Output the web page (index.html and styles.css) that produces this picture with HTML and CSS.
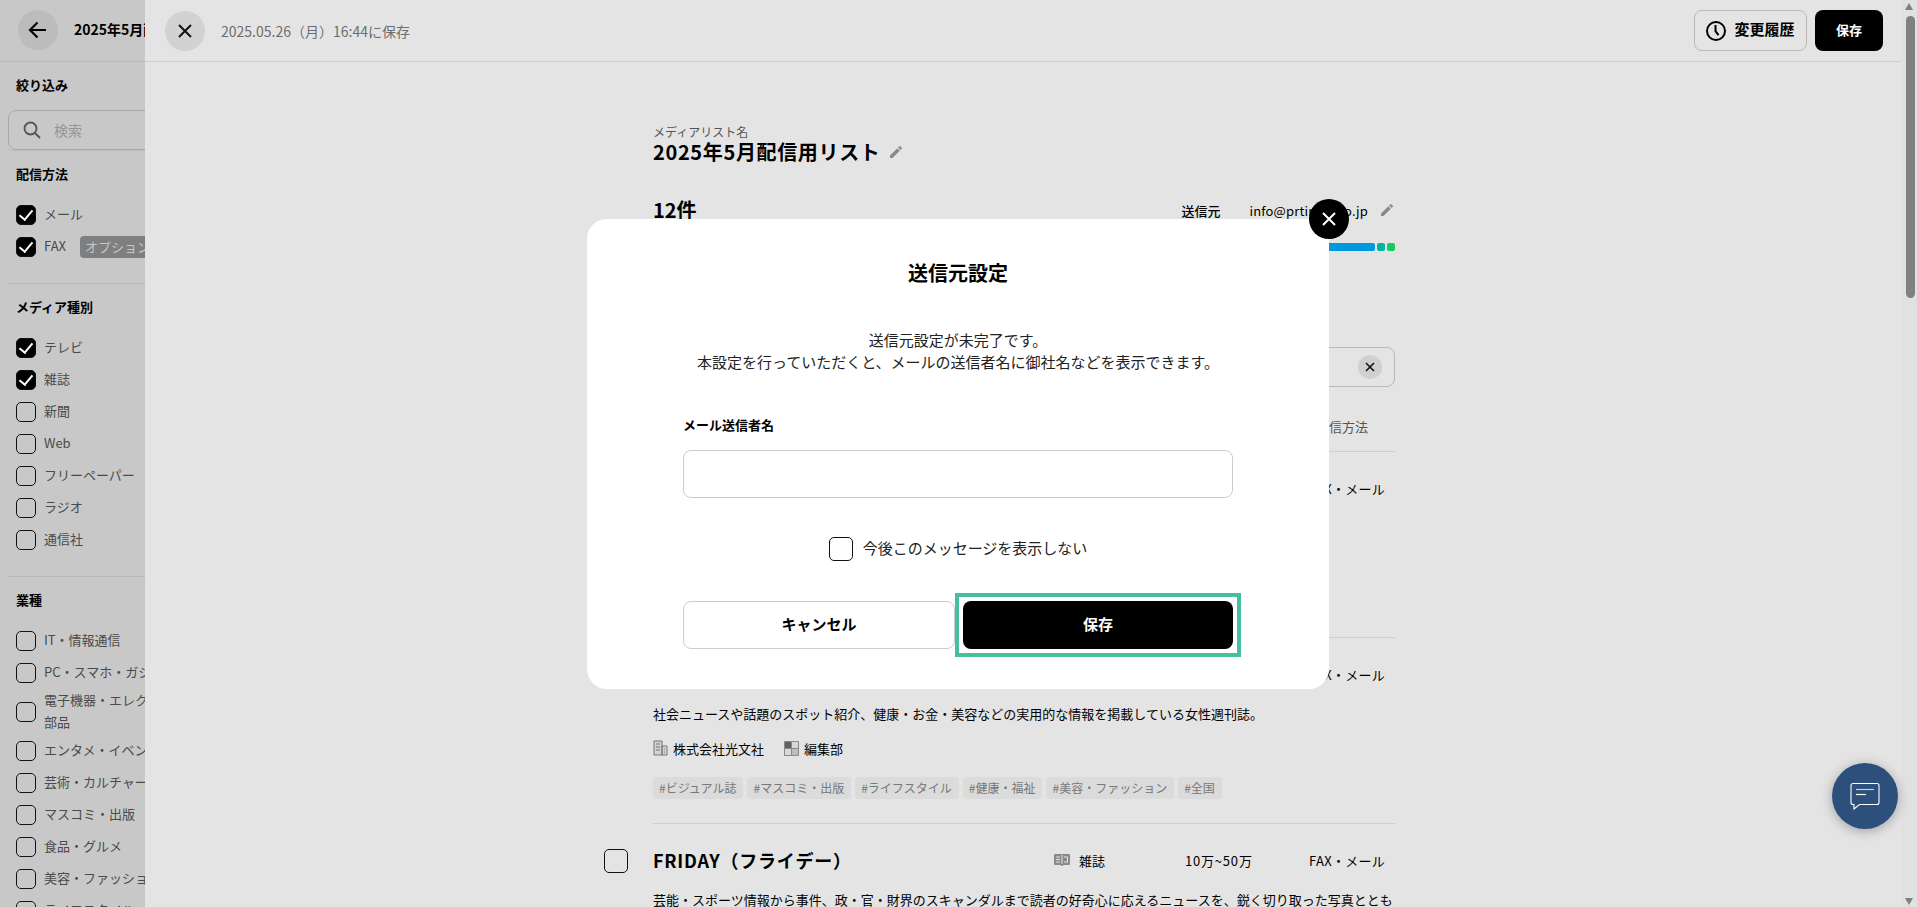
FILE: index.html
```html
<!DOCTYPE html>
<html lang="ja">
<head>
  <meta charset="UTF-8" />
  <title>メディアリスト</title>
  <link rel="stylesheet" href="styles.css">
</head>
<body>

  <aside class="sidebar">
    <div class="sidebar-head">
      <button class="round-btn dark">
        <svg width="20" height="20" viewBox="0 0 20 20"><path d="M18 10H2M9.500 2.500 2 10l7.500 7.500" fill="none" stroke="#000" stroke-width="2.200"/></svg>
      </button>
      <span class="list-name">2025年5月配信用リスト</span>
    </div>
    <div class="filter">
      <h4 class="filter-title">絞り込み</h4>
      <div class="search-wrap">
        <div class="search">
          <svg width="18" height="18" viewBox="0 0 18 18"><circle cx="7.500" cy="7.500" r="6" fill="none" stroke="#555" stroke-width="1.800"/><path d="m12 12 5 5" stroke="#555" stroke-width="2"/></svg>
          <span>検索</span>
        </div>
      </div>

      <section class="filter-group">
        <h4 class="filter-title">配信方法</h4>
        <div class="rows">
          <label class="row-check"><i class="check on"></i><span>メール</span></label>
          <label class="row-check"><i class="check on"></i><span>FAX</span><b class="option">オプション</b></label>
        </div>
      </section>

      <section class="filter-group">
        <h4 class="filter-title">メディア種別</h4>
        <div class="rows">
          <label class="row-check"><i class="check on"></i><span>テレビ</span></label>
          <label class="row-check"><i class="check on"></i><span>雑誌</span></label>
          <label class="row-check"><i class="check"></i><span>新聞</span></label>
          <label class="row-check"><i class="check"></i><span>Web</span></label>
          <label class="row-check"><i class="check"></i><span>フリーペーパー</span></label>
          <label class="row-check"><i class="check"></i><span>ラジオ</span></label>
          <label class="row-check"><i class="check"></i><span>通信社</span></label>
        </div>
      </section>

      <section class="filter-group">
        <h4 class="filter-title">業種</h4>
        <div class="rows">
          <label class="row-check"><i class="check"></i><span>IT・情報通信</span></label>
          <label class="row-check"><i class="check"></i><span>PC・スマホ・ガジェット</span></label>
          <label class="row-check"><i class="check"></i><span>電子機器・エレクトロニクス部品</span></label>
          <label class="row-check"><i class="check"></i><span>エンタメ・イベント</span></label>
          <label class="row-check"><i class="check"></i><span>芸術・カルチャー</span></label>
          <label class="row-check"><i class="check"></i><span>マスコミ・出版</span></label>
          <label class="row-check"><i class="check"></i><span>食品・グルメ</span></label>
          <label class="row-check"><i class="check"></i><span>美容・ファッション</span></label>
          <label class="row-check"><i class="check"></i><span>ライフスタイル</span></label>
        </div>
      </section>
    </div>
  </aside>

  <main class="panel">
    <header class="topbar">
      <button class="round-btn">
        <svg width="16" height="16" viewBox="0 0 16 16"><path d="m2 2 12 12M14 2 2 14" stroke="#111" stroke-width="2"/></svg>
      </button>
      <span class="saved-at">2025.05.26（月）16:44に保存</span>
      <button class="btn-history">
        <svg width="20" height="20" viewBox="0 0 20 20"><circle cx="10" cy="10" r="9" fill="none" stroke="#000" stroke-width="2"/><path d="M9.500 4v6.200l3 4" fill="none" stroke="#000" stroke-width="2"/></svg>
        <span>変更履歴</span>
      </button>
      <button class="btn-save">保存</button>
    </header>

    <div class="content">
      <p class="name-label">メディアリスト名</p>
      <h1 class="name">2025年5月配信用リスト
        <svg class="pen" width="16" height="16" viewBox="0 0 24 24"><path d="M3 17.250V21h3.750L17.810 9.940l-3.750-3.750L3 17.250zM20.710 7.040a1 1 0 0 0 0-1.410l-2.340-2.340a1 1 0 0 0-1.410 0l-1.830 1.830 3.750 3.750 1.830-1.830z"/></svg>
      </h1>

      <div class="summary">
        <h2 class="count">12件</h2>
        <div class="sender">
          <b>送信元</b>
          <span>info@prtimes.co.jp</span>
          <svg class="pen" width="16" height="16" viewBox="0 0 24 24"><path d="M3 17.250V21h3.750L17.810 9.940l-3.750-3.750L3 17.250zM20.710 7.040a1 1 0 0 0 0-1.410l-2.340-2.340a1 1 0 0 0-1.410 0l-1.830 1.830 3.750 3.750 1.830-1.830z"/></svg>
        </div>
      </div>

      <div class="usage">
        <i class="usage-mail"></i>
        <i class="usage-teal"></i>
        <i class="usage-green"></i>
      </div>

      <div class="tag-input">
        <button class="chip-clear">
          <svg width="10" height="10" viewBox="0 0 10 10"><path d="m1 1 8 8M9 1 1 9" stroke="#111" stroke-width="1.600"/></svg>
        </button>
      </div>

      <div class="list-head">配信方法</div>

      <article class="media">
        <div class="media-head">
          <i class="check big"></i>
          <h3 class="media-title"></h3>
          <span class="col-delivery">FAX・メール</span>
        </div>
      </article>

      <article class="media">
        <div class="media-head">
          <i class="check big"></i>
          <h3 class="media-title"></h3>
          <span class="col-delivery">FAX・メール</span>
        </div>
        <p class="media-desc">社会ニュースや話題のスポット紹介、健康・お金・美容などの実用的な情報を掲載している女性週刊誌。</p>
        <div class="media-meta">
          <span>
            <svg width="15" height="16" viewBox="0 0 15 16"><path d="M1 1h8v14H1zM9 6h5v9H9z" fill="#d2d2d2" stroke="#777"/><path d="M3 4h4M3 7h4M3 10h4M11 9h1M11 12h1" stroke="#777"/></svg>
            株式会社光文社
          </span>
          <span>
            <svg width="15" height="15" viewBox="0 0 15 15"><path fill="#d8d8d8" stroke="#8a8a8a" d="M.5.500h14v14H.5z"/><path fill="#5f5f5f" d="M1 1h6v6H1z"/><path fill="#bdbdbd" d="M8 8h6v6H8z"/><path stroke="#8a8a8a" d="M7.500 1v13M1 7.500h13"/></svg>
            編集部
          </span>
        </div>
        <ul class="tags">
          <li>#ビジュアル誌</li>
          <li>#マスコミ・出版</li>
          <li>#ライフスタイル</li>
          <li>#健康・福祉</li>
          <li>#美容・ファッション</li>
          <li>#全国</li>
        </ul>
      </article>

      <article class="media">
        <div class="media-head">
          <i class="check big"></i>
          <h3 class="media-title">FRIDAY（フライデー）</h3>
          <span class="col-type">
            <svg width="16" height="12" viewBox="0 0 16 12"><rect width="16" height="11" rx="1" fill="#8a8a8a"/><path d="M7 10h2v2H7z" fill="#8a8a8a"/><path stroke="#e4e4e4" d="M8 1v9M2 3h4M2 5.500h4M2 8h4M10 3h4M13.500 3v5M10 8h4"/></svg>
            雑誌
          </span>
          <span class="col-reach">10万~50万</span>
          <span class="col-delivery">FAX・メール</span>
        </div>
        <p class="media-desc">芸能・スポーツ情報から事件、政・官・財界のスキャンダルまで読者の好奇心に応えるニュースを、鋭く切り取った写真とともに伝える写真週刊誌。</p>
      </article>
    </div>
  </main>

  <div class="scrollbar">
    <i class="arrow-up"></i>
    <i class="thumb"></i>
    <i class="arrow-down"></i>
  </div>

  <div class="overlay">
    <div class="modal">
      <button class="modal-close">
        <svg width="14" height="14" viewBox="0 0 14 14"><path d="m1 1 12 12M13 1 1 13" stroke="#fff" stroke-width="2"/></svg>
      </button>
      <h2 class="modal-title">送信元設定</h2>
      <p class="modal-msg">送信元設定が未完了です。<br>本設定を行っていただくと、メールの送信者名に御社名などを表示できます。</p>
      <label class="field-label" for="senderName">メール送信者名</label>
      <input class="field" id="senderName" type="text" />
      <label class="dont-show"><i class="check big"></i><span>今後このメッセージを表示しない</span></label>
      <div class="modal-actions">
        <button class="btn-cancel">キャンセル</button>
        <button class="btn-confirm">保存</button>
      </div>
    </div>
  </div>

  <button class="chat-fab">
    <svg width="30" height="28" viewBox="0 0 30 28"><path d="M3 1.500h24a2 2 0 0 1 2 2v17a2 2 0 0 1-2 2H9.500L4 27v-4.500H3a2 2 0 0 1-2-2v-17a2 2 0 0 1 2-2z" fill="none" stroke="#fff" stroke-width="1.100"/><path d="M6 7.500h18" stroke="#c6cfdc" stroke-width="1.200"/><path d="M6 12.500h10" stroke="#fff" stroke-width="1.200"/></svg>
  </button>

</body>
</html>
```

FILE: styles.css
```css
* { box-sizing: border-box; }

html, body { height: 100%; }

body {
  margin: 0;
  display: flex;
  overflow: hidden;
  background: #e4e4e4;
  color: #000;
  font-family: "Noto Sans CJK JP", "Noto Sans", sans-serif;
  font-size: 13px;
}

button {
  font-family: inherit;
  cursor: pointer;
  padding: 0;
  border: 0;
  background: none;
}

h1, h2, h3, h4, p, ul { margin: 0; padding: 0; }

/* sidebar behind the drawer */
.sidebar {
  width: 145px;
  flex: none;
  overflow: hidden;
  background: #c8c8c8;
}

.sidebar-head {
  width: 145px;
  height: 62px;
  padding: 10px 0 0 18px;
  display: flex;
  gap: 16px;
  white-space: nowrap;
  border-bottom: 1px solid #b9b9b9;
}

.list-name {
  font-size: 14px;
  font-weight: 700;
  line-height: 38px;
}

.round-btn {
  width: 40px;
  height: 40px;
  flex: none;
  border-radius: 50%;
  background: #d2d2d2;
  display: flex;
  align-items: center;
  justify-content: center;
}

.round-btn.dark { background: #bcbcbc; }

.filter { width: 222px; padding: 14px 0 0 8px; }

.filter-title {
  font-size: 13px;
  font-weight: 700;
  line-height: 18px;
  padding-left: 8px;
}

.search-wrap { padding-top: 16px; border-bottom: 1px solid #bcbcbc; }

.search {
  height: 40px;
  display: flex;
  align-items: center;
  gap: 13px;
  padding-left: 14px;
  border: 1px solid #a8a8a8;
  border-radius: 8px;
  color: #959595;
  font-size: 14px;
}

.filter-group {
  padding: 14px 0 20px;
  border-bottom: 1px solid #b9b9b9;
}

.rows { margin-top: 16px; padding-left: 8px; }

.row-check {
  min-height: 32px;
  display: flex;
  align-items: center;
  gap: 8px;
  color: #4a4a4a;
  font-size: 13px;
  line-height: 22px;
}

.row-check span { padding-bottom: 2px; }

.option {
  margin-left: 6px;
  padding: 0 5px;
  flex: none;
  background: #7f7f7f;
  border-radius: 4px;
  color: #c8c8c8;
  font-weight: 400;
  white-space: nowrap;
}

.check {
  position: relative;
  width: 20px;
  height: 20px;
  flex: none;
  border: 1.500px solid #111;
  border-radius: 5px;
}

.check.on { background: #000; }

.check.on::after {
  content: "";
  position: absolute;
  left: 5px;
  top: 1px;
  width: 6px;
  height: 11px;
  border: solid #fff;
  border-width: 0 2px 2px 0;
  transform: rotate(40deg);
}

.check.big { width: 24px; height: 24px; }

/* drawer */
.panel { flex: 1; min-width: 0; overflow: hidden; }

.topbar {
  height: 62px;
  padding: 0 18px 0 20px;
  display: flex;
  align-items: center;
  border-bottom: 1px solid #cecece;
}

.saved-at {
  margin-left: 16px;
  margin-right: auto;
  color: #6d6d6d;
  font-size: 14px;
}

.btn-history {
  width: 113px;
  height: 41px;
  display: flex;
  align-items: center;
  justify-content: center;
  gap: 8px;
  border: 1px solid #b9b9b9;
  border-radius: 8px;
  font-size: 15px;
  font-weight: 700;
}

.btn-history span { margin-bottom: 4px; }

.btn-save {
  width: 68px;
  height: 41px;
  margin-left: 8px;
  padding-bottom: 2px;
  background: #000;
  border-radius: 8px;
  color: #fff;
  font-size: 13px;
  font-weight: 700;
}

.content {
  width: 742px;
  margin-left: 508px;
  padding-top: 63px;
}

.name-label { font-size: 12px; line-height: 14px; color: #555; }

.name {
  display: flex;
  align-items: center;
  gap: 8px;
  font-size: 20px;
  line-height: 26px;
  font-weight: 700;
  letter-spacing: 0.65px;
}

.pen { fill: #8a8a8a; flex: none; }

.summary {
  margin-top: 31px;
  display: flex;
  align-items: center;
  justify-content: space-between;
}

.count { font-size: 20px; line-height: 28px; }

.sender {
  display: flex;
  align-items: center;
  font-size: 13px;
}

.sender b { font-weight: 500; margin-right: 29px; }
.sender span { margin-right: 11px; letter-spacing: 0.15px; }

.usage {
  margin-top: 19px;
  height: 8px;
  display: flex;
  gap: 2px;
}

.usage i { border-radius: 2px; }
.usage-mail { flex: 1; background: #0099e0; }
.usage-teal { width: 8px; background: #00b5a0; }
.usage-green { width: 8px; background: #14cc5c; }

.tag-input {
  margin-top: 96px;
  height: 40px;
  padding-right: 12px;
  display: flex;
  align-items: center;
  justify-content: flex-end;
  border: 1px solid #b9b9b9;
  border-radius: 8px;
}

.chip-clear {
  width: 24px;
  height: 24px;
  display: flex;
  align-items: center;
  justify-content: center;
  background: #d0d0d0;
  border-radius: 50%;
}

.list-head {
  margin-top: 30px;
  padding: 0 27px 14px 0;
  line-height: 20px;
  text-align: right;
  color: #555;
  border-bottom: 1px solid #cecece;
}

.media {
  min-height: 186px;
  padding-top: 25px;
  border-bottom: 1px solid #cecece;
}

.media-head {
  height: 24px;
  margin-left: -49px;
  display: flex;
  align-items: center;
}

.media-head span, .media-title { margin-bottom: 2px; }

.media-title {
  flex: 1;
  margin-left: 25px;
  font-size: 18px;
  font-weight: 700;
  letter-spacing: 0.75px;
}

.col-type {
  width: 131px;
  display: flex;
  align-items: center;
  gap: 9px;
}

.col-reach { width: 124px; letter-spacing: 0.8px; }
.col-delivery { width: 86px; white-space: nowrap; letter-spacing: 0.3px; }

.media-desc {
  margin-top: 17px;
  line-height: 20px;
}

.media-meta {
  margin-top: 14px;
  height: 20px;
  display: flex;
  align-items: center;
  gap: 20px;
}

.media-meta span {
  display: flex;
  align-items: center;
  gap: 5px;
}

.tags {
  margin-top: 19px;
  display: flex;
  gap: 4px;
  list-style: none;
}

.tags li {
  height: 22px;
  padding: 0 7px 0 6px;
  background: #dbdbdb;
  border-radius: 4px;
  color: #777;
  font-size: 12px;
  line-height: 22px;
}

/* page scrollbar */
.scrollbar {
  width: 16px;
  flex: none;
  position: relative;
  background: #e1e1e1;
}

.thumb {
  display: block;
  width: 9px;
  height: 282px;
  margin: 6px 0 0 5px;
  background: #808080;
  border-radius: 5px;
}

.arrow-up, .arrow-down {
  display: block;
  width: 0;
  height: 0;
  margin-left: 4px;
  border: solid transparent;
  border-width: 0 4px;
}

.arrow-up { margin-top: 3px; border-bottom: 7px solid #808080; }

.arrow-down {
  position: absolute;
  bottom: 2px;
  border-top: 7px solid #808080;
}

/* sender settings dialog */
.overlay {
  position: fixed;
  inset: 0;
  padding-right: 1px;
  display: flex;
  align-items: center;
  justify-content: center;
}

.modal {
  position: relative;
  width: 742px;
  height: 470px;
  padding: 39px 96px 0;
  background: #fff;
  border-radius: 20px;
}

.modal-close {
  position: absolute;
  top: -20px;
  right: -20px;
  width: 40px;
  height: 40px;
  display: flex;
  align-items: center;
  justify-content: center;
  background: #000;
  border-radius: 50%;
}

.modal-title {
  font-size: 20px;
  line-height: 30px;
  text-align: center;
}

.modal-msg {
  margin-top: 41px;
  font-size: 15px;
  line-height: 22px;
  text-align: center;
  color: #222;
}

.field-label {
  display: block;
  margin-top: 43px;
  font-size: 13px;
  font-weight: 700;
  line-height: 18px;
}

.field {
  display: block;
  width: 100%;
  height: 48px;
  margin-top: 16px;
  border: 1px solid #ccc;
  border-radius: 8px;
}

.dont-show {
  margin-top: 39px;
  display: flex;
  align-items: center;
  justify-content: center;
  gap: 10px;
  font-size: 15px;
  color: #222;
}

.dont-show span { padding-bottom: 2px; }

.modal-actions {
  margin-top: 40px;
  display: flex;
  gap: 8px;
}

.btn-cancel, .btn-confirm {
  flex: 1;
  height: 48px;
  padding-bottom: 2px;
  border-radius: 8px;
  font-size: 15px;
  font-weight: 700;
}

.btn-cancel { border: 1px solid #ccc; background: #fff; }

.btn-confirm {
  position: relative;
  background: #000;
  color: #fff;
}

/* square focus ring round the rounded button */
.btn-confirm::after {
  content: "";
  position: absolute;
  inset: -8px;
  border: 4px solid #45bf9f;
}

.chat-fab {
  position: fixed;
  right: 19px;
  bottom: 78px;
  width: 66px;
  height: 66px;
  display: flex;
  align-items: center;
  justify-content: center;
  background: #2c4f7c;
  border-radius: 50%;
  box-shadow: 0 2px 12px rgba(0,0,0,0.3);
}
```
